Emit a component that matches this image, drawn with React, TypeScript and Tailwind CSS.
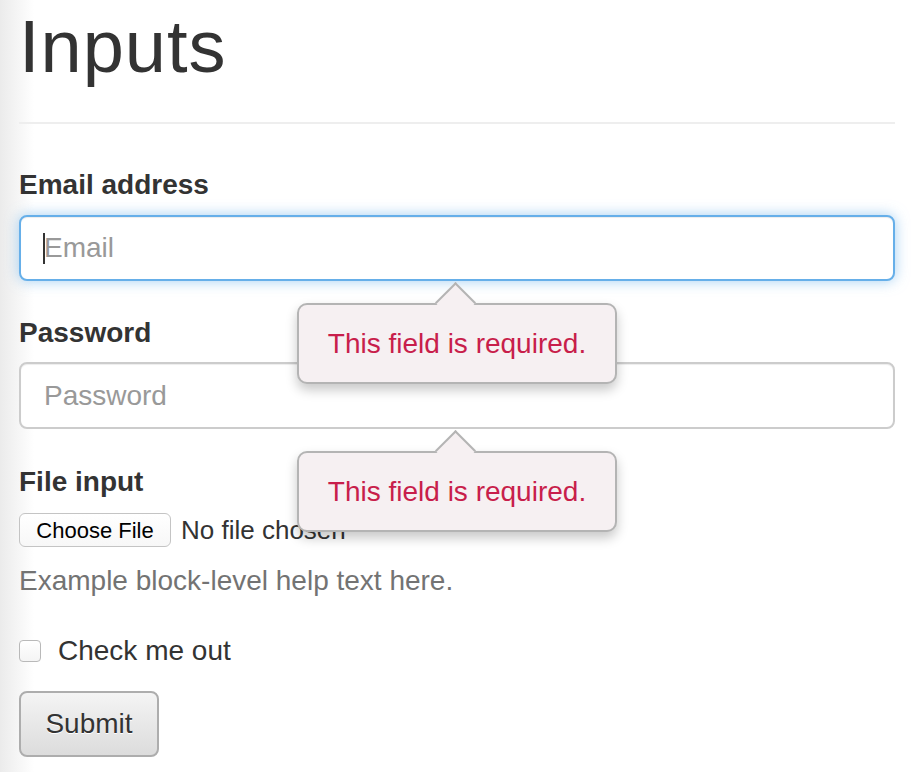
import React from 'react';

function RequiredTip() {
  return (
    <div className="absolute left-[278px] top-full z-10 mt-[22px] w-[320px]">
      <span className="absolute left-[144px] top-[-15px] z-20 h-[29px] w-[29px] rotate-45 border-l-2 border-t-2 border-[#b4b4b4] bg-[#f6f0f2]" />
      <div className="flex h-[81px] items-center justify-center rounded-[10px] border-2 border-[#b4b4b4] bg-[#f6f0f2] text-[28px] text-[#c81e4b] shadow-[0_6px_12px_rgba(0,0,0,0.22)]">
        This field is required.
      </div>
    </div>
  );
}

export default function App() {
  return (
    <div className="min-h-[772px] bg-[linear-gradient(to_right,#ebebeb,#ffffff_34px)] pl-[19px] pr-[21px] pt-[7px] font-['Liberation_Sans',Arial,sans-serif] text-[#333]">
      <h1 className="text-[74px] leading-[79px] tracking-[1px]">Inputs</h1>
      <div className="mt-[36px] h-[2px] bg-[#eeeeee]" />

      <form className="mt-[41px]" onSubmit={(e) => e.preventDefault()}>
        <div>
          <label className="mb-[10px] block text-[28px] font-bold leading-[40px]">Email address</label>
          <div className="relative">
            <input
              type="email"
              placeholder="Email"
              className="block h-[66px] w-full rounded-[8px] border-2 border-[#66afe9] bg-white px-[23px] text-[28px] outline-none shadow-[inset_0_1px_1px_rgba(0,0,0,0.075),0_0_14px_rgba(102,175,233,0.6)] placeholder:text-[#999]"
            />
            <span className="absolute left-[24px] top-[18px] h-[31px] w-[2px] bg-[#333]" />
            <RequiredTip />
          </div>
        </div>

        <div className="mt-[32px]">
          <label className="mb-[9px] block text-[28px] font-bold leading-[40px]">Password</label>
          <div className="relative">
            <input
              type="password"
              placeholder="Password"
              className="block h-[67px] w-full rounded-[8px] border-2 border-[#cccccc] bg-white px-[23px] text-[28px] outline-none shadow-[inset_0_1px_1px_rgba(0,0,0,0.075)] placeholder:text-[#999]"
            />
            <RequiredTip />
          </div>
        </div>

        <div className="mt-[33px]">
          <label className="mb-[8px] block text-[28px] font-bold leading-[40px]">File input</label>
          <div className="flex h-[40px] items-center gap-[10px]">
            <span className="flex h-[34px] w-[152px] items-center justify-center rounded-[6px] border border-[#c4c4c4] bg-[linear-gradient(#ffffff,#f7f7f7)] text-[22px] text-black">
              Choose File
            </span>
            <span className="text-[26px] text-[#333]">No file chosen</span>
          </div>
          <p className="mt-[11px] text-[28px] leading-[40px] text-[#737373]">Example block-level help text here.</p>
        </div>

        <label className="mt-[30px] flex h-[40px] items-center gap-[17px] text-[28px]">
          <span className="h-[22px] w-[22px] rounded-[4px] border border-[#b9b9b9] bg-[linear-gradient(#ffffff,#f4f4f4)]" />
          Check me out
        </label>

        <button
          type="submit"
          className="mt-[20px] h-[66px] w-[140px] rounded-[8px] border-2 border-[#adadad] bg-[linear-gradient(#f4f4f4,#dcdcdc)] text-[28px] text-[#333] [text-shadow:0_1px_0_#fff]"
        >
          Submit
        </button>
      </form>
    </div>
  );
}
